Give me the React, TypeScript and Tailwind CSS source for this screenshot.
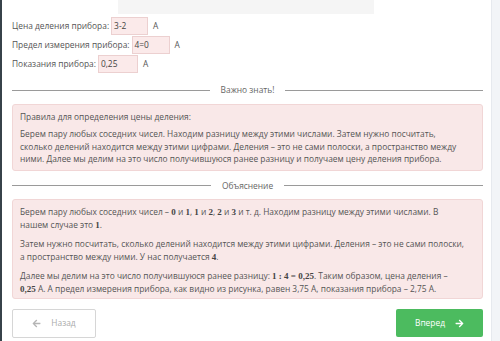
import React from 'react';
import { FaArrowLeft, FaArrowRight } from 'react-icons/fa';

const fields = [
  { label: 'Цена деления прибора:', value: '3-2', width: 'w-[37px]' },
  { label: 'Предел измерения прибора:', value: '4=0', width: 'w-[38px]' },
  { label: 'Показания прибора:', value: '0,25', width: 'w-[40px]' },
];

const Divider = ({ title }: { title: string }) => (
  <div className="flex items-center gap-[10px]">
    <div className="h-px flex-1 bg-[#9a9a9a]" />
    <span className="text-[8.4px] text-[#666] px-[1px]">{title}</span>
    <div className="h-px flex-1 bg-[#9a9a9a]" />
  </div>
);

const M = ({ children }: { children: React.ReactNode }) => (
  <b className="font-['Liberation_Serif',serif] text-[9px] font-bold leading-none text-[#444]">{children}</b>
);

export default function App() {
  return (
    <div className="flex w-[500px] h-[341px] overflow-hidden bg-white font-['Open_Sans',sans-serif] text-[#555]">
      <div className="w-[2px] shrink-0 bg-[#37424a]" />
      <div className="flex-1 flex flex-col pl-[10px] pr-[8px]">
        <div className="ml-[106px] w-[256px] h-[14px] shrink-0 bg-[#f5f5f5]" />

        <div className="flex flex-col gap-[1px] mt-[3px] shrink-0">
          {fields.map((f) => (
            <div key={f.label} className="flex items-center h-[18px] text-[8.4px]">
              <span>{f.label}</span>
              <span className={`ml-[2px] h-[18px] ${f.width} border border-[#ecd0d0] bg-[#fbeaea] text-[#444] px-[2px] leading-[15px]`}>
                {f.value}
              </span>
              <span className="ml-[5px]">А</span>
            </div>
          ))}
        </div>

        <div className="mt-[11px] shrink-0">
          <Divider title="Важно знать!" />
        </div>

        <div className="mt-[7px] shrink-0 rounded-[3px] border border-[#f1d6d6] bg-[#f9e8e8] px-[7px] pt-[6px] pb-[4px] text-[8.4px] leading-[12.5px]">
          <p className="mb-[5px]">Правила для определения цены деления:</p>
          <p>
            Берем пару любых соседних чисел. Находим разницу между этими числами. Затем нужно посчитать,
            <br />
            сколько делений находится между этими цифрами. Деления – это не сами полоски, а пространство между
            <br />
            ними. Далее мы делим на это число получившуюся ранее разницу и получаем цену деления прибора.
          </p>
        </div>

        <div className="mt-[9px] shrink-0">
          <Divider title="Объяснение" />
        </div>

        <div className="mt-[7px] shrink-0 rounded-[3px] border border-[#f1d6d6] bg-[#f9e8e8] px-[7px] pt-[5px] pb-[3px] text-[8.4px] leading-[13px]">
          <p className="mb-[6px]">
            Берем пару любых соседних чисел – <M>0</M> и <M>1</M>, <M>1</M> и <M>2</M>, <M>2</M> и <M>3</M> и т. д.
            Находим разницу между этими числами. В
            <br />
            нашем случае это <M>1</M>.
          </p>
          <p className="mb-[6px]">
            Затем нужно посчитать, сколько делений находится между этими цифрами. Деления – это не сами полоски,
            <br />
            а пространство между ними. У нас получается <M>4</M>.
          </p>
          <p>
            Далее мы делим на это число получившуюся ранее разницу: <M>1 : 4 = 0,25</M>. Таким образом, цена деления –
            <br />
            <M>0,25</M> А. А предел измерения прибора, как видно из рисунка, равен 3,75 А, показания прибора – 2,75 А.
          </p>
        </div>

        <div className="mt-auto mb-[3px] flex shrink-0 justify-between">
          <button className="flex h-[29px] w-[84px] items-center justify-center gap-[10px] rounded-[2px] border border-[#d6d6d6] bg-white text-[8.4px] text-[#aaa]">
            <FaArrowLeft className="text-[9px] text-[#b5b5b5]" />
            Назад
          </button>
          <button className="flex h-[28px] w-[87px] items-center justify-center gap-[10px] rounded-[2px] bg-[#4cbb5f] text-[8.4px] text-white">
            Вперед
            <FaArrowRight className="text-[9px]" />
          </button>
        </div>
      </div>
      <div className="w-[9px] shrink-0 border-l border-[#e6e9ee] bg-[#f2f4f7]" />
    </div>
  );
}
